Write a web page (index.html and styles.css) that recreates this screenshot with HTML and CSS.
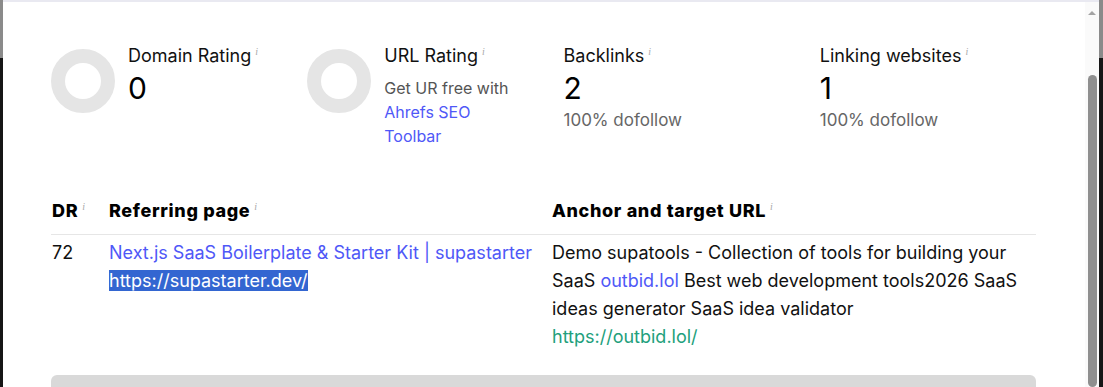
FILE: index.html
```html
<!DOCTYPE html>
<html lang="en">
<head>
<meta charset="utf-8">
<title>Backlinks</title>
<link rel="stylesheet" href="styles.css">
</head>
<body>
<div class="screen">
  <div class="backdrop-edge left"></div>
  <div class="modal">
    <div class="modal-content">
      <div class="stats">
        <div class="stat">
          <div class="ring"></div>
          <div class="stat-body">
            <div class="stat-label">Domain Rating<span class="info">i</span></div>
            <div class="stat-value">0</div>
          </div>
        </div>
        <div class="stat">
          <div class="ring"></div>
          <div class="stat-body">
            <div class="stat-label">URL Rating<span class="info">i</span></div>
            <div class="stat-desc">Get UR free with <a class="link" href="#">Ahrefs SEO Toolbar</a></div>
          </div>
        </div>
        <div class="stat">
          <div class="stat-body">
            <div class="stat-label">Backlinks<span class="info">i</span></div>
            <div class="stat-value">2</div>
            <div class="stat-sub">100% dofollow</div>
          </div>
        </div>
        <div class="stat">
          <div class="stat-body">
            <div class="stat-label">Linking websites<span class="info">i</span></div>
            <div class="stat-value">1</div>
            <div class="stat-sub">100% dofollow</div>
          </div>
        </div>
      </div>

      <div class="table">
        <div class="thead">
          <div class="th col-dr">DR<span class="info">i</span></div>
          <div class="th col-ref">Referring page<span class="info">i</span></div>
          <div class="th col-anchor">Anchor and target URL<span class="info">i</span></div>
        </div>
        <div class="trow">
          <div class="td col-dr">72</div>
          <div class="td col-ref">
            <a class="link" href="#">Next.js SaaS Boilerplate &amp; Starter Kit | supastarter</a><br>
            <span class="selected">https://supastarter.dev/</span>
          </div>
          <div class="td col-anchor">Demo supatools - Collection of tools for building your SaaS <a class="link" href="#">outbid.lol</a> Best web development tools2026 SaaS ideas generator SaaS idea validator<br><a class="target" href="#">https://outbid.lol/</a></div>
        </div>
      </div>

      <div class="next-block"></div>
    </div>
    <div class="scrollbar">
      <div class="scroll-arrow"></div>
      <div class="scroll-thumb"></div>
    </div>
  </div>
  <div class="backdrop-edge right"></div>
</div>
</body>
</html>
```

FILE: styles.css
```css
html, body {
  margin: 0;
  padding: 0;
  height: 100%;
  overflow: hidden;
}

body {
  font-family: "Inter", "Liberation Sans", sans-serif;
  color: #111;
  background: #151515;
}

.screen {
  display: flex;
  height: 387px;
}

.backdrop-edge {
  background: linear-gradient(to bottom, #8a8a8a 0, #8a8a8a 58px, #161616 58px);
}
.backdrop-edge.left { width: 3px; }
.backdrop-edge.right { width: 4px; }

.modal {
  flex: 1;
  display: flex;
  background: #fff;
  border-top: 2px solid #e9e9f1;
  overflow: hidden;
}

.modal-content {
  flex: 1;
  padding: 42px 49px 0 48px;
}

/* stats */
.stats {
  display: grid;
  grid-template-columns: repeat(4, 1fr);
  column-gap: 40px;
}

.stat {
  display: flex;
  gap: 13px;
  align-items: flex-start;
}

.ring {
  flex: none;
  width: 64px;
  height: 64px;
  margin-top: 5px;
  box-sizing: border-box;
  border: 14px solid #e5e5e5;
  border-radius: 50%;
}

.stat-label {
  font-size: 18px;
  line-height: 24px;
  color: #111;
}

.info {
  font-family: "Liberation Serif", serif;
  font-style: italic;
  font-size: 10px;
  font-weight: 400;
  letter-spacing: 0;
  color: #a8a8a8;
  vertical-align: 7px;
  line-height: 0;
  margin-left: 4px;
}

.stat-value {
  font-size: 30px;
  line-height: 40px;
  color: #000;
}

.stat-sub {
  font-size: 17px;
  line-height: 24px;
  color: #666;
}

.stat-desc {
  margin-top: 8px;
  font-size: 16px;
  line-height: 24px;
  color: #555;
  max-width: 136px;
}

.link {
  color: #4f58f7;
  text-decoration: none;
}

/* table */
.table {
  margin-top: 51px;
}

.thead, .trow {
  display: grid;
  grid-template-columns: 58px 443px 1fr;
}

.thead {
  border-bottom: 1px solid #e6e6e6;
  padding-bottom: 11px;
}

.th {
  font-weight: 800;
  font-size: 18px;
  line-height: 24px;
  letter-spacing: 0.65px;
  color: #000;
}

.trow {
  padding-top: 4px;
}

.td {
  font-size: 18px;
  line-height: 28px;
  color: #111;
}

.col-dr { padding-left: 1px; }

.selected {
  background: #3366d1;
  color: #fff;
}

.target {
  color: #22a07c;
  text-decoration: none;
}

.next-block {
  margin-top: 24px;
  height: 40px;
  background: #d9d9d9;
  border-radius: 6px 6px 0 0;
}

/* scrollbar */
.scrollbar {
  flex: none;
  width: 14px;
  background: #fafafa;
  display: flex;
  flex-direction: column;
  align-items: center;
}

.scroll-arrow {
  margin-top: 9px;
  width: 0;
  height: 0;
  border-left: 4px solid transparent;
  border-right: 4px solid transparent;
  border-bottom: 4px solid #a3a3a3;
}

.scroll-thumb {
  margin-top: 60px;
  width: 9px;
  height: 320px;
  background: #8f8f8f;
  border-radius: 5px;
}
```
